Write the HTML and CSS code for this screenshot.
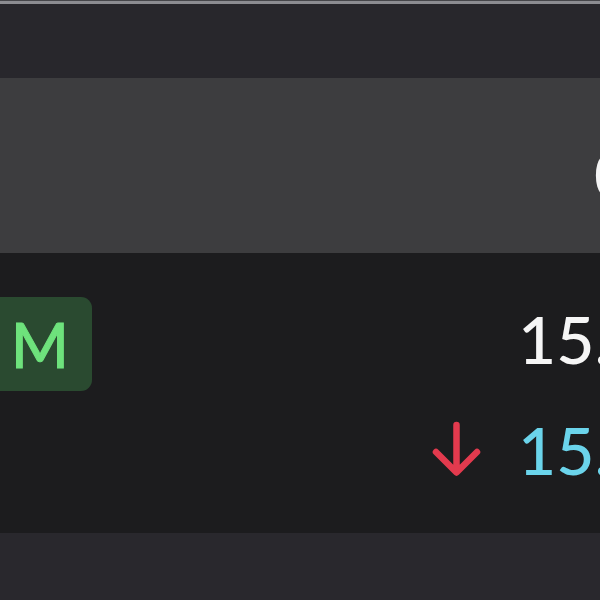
FILE: index.html
```html
<!DOCTYPE html>
<html>
<head>
<meta charset="utf-8">
<link rel="stylesheet" href="styles.css">
</head>
<body>
<div class="screen">
  <div class="topline"></div>
  <div class="header"></div>
  <div class="band"><span class="band-text">0</span></div>
  <div class="row">
    <div class="badge">M</div>
    <div class="values">
      <div class="val main">15.62</div>
      <div class="val sub">
        <svg class="arrow" width="52" height="58" viewBox="0 0 52 58"><path d="M26.5 5 V52 M6 32 L26.5 52.5 L47 32" fill="none" stroke="#e33a4e" stroke-width="6.5" stroke-linecap="round" stroke-linejoin="round"/></svg>
        <span class="subnum">15.48</span>
      </div>
    </div>
  </div>
  <div class="footer"></div>
</div>
</body>
</html>
```
FILE: styles.css
```css
html, body {
  margin: 0;
  padding: 0;
  background: #29282d;
  overflow: hidden;
}
.screen {
  width: 600px;
  height: 600px;
  overflow: hidden;
  font-family: "Lato", "DejaVu Sans", sans-serif;
  font-weight: 500;
}
.topline {
  height: 1px;
  background: #46464a;
  border-bottom: 3px solid #8c8c91;
}
.header {
  height: 74px;
  background: #28272c;
}
.band {
  height: 175px;
  background: #3d3d3f;
  padding-left: 594px;
  padding-top: 63px;
  box-sizing: border-box;
  white-space: nowrap;
}
.band-text {
  font-size: 66px;
  line-height: 1;
  color: #f4f4f4;
}
.row {
  height: 280px;
  background: #1c1c1e;
  display: flex;
  align-items: flex-start;
  padding-top: 44px;
  box-sizing: border-box;
}
.badge {
  width: 104px;
  height: 94px;
  margin-left: -12px;
  border-radius: 11px;
  background: #2a4a30;
  color: #6ee27c;
  font-size: 62px;
  -webkit-text-stroke: 1px currentColor;
  display: flex;
  align-items: center;
  justify-content: center;
  flex-shrink: 0;
}
.values {
  margin-left: 338px;
  margin-top: 9px;
  display: flex;
  flex-direction: column;
  gap: 45px;
  white-space: nowrap;
}
.val {
  font-size: 66px;
  line-height: 1;
  height: 66px;
}
.main {
  color: #f6f6f6;
  padding-left: 88px;
}
.sub {
  display: flex;
  align-items: flex-start;
  color: #6bd4eb;
}
.arrow {
  display: block;
  margin-top: 3px;
  flex-shrink: 0;
}
.subnum {
  margin-left: 36px;
}
.footer {
  height: 67px;
  background: #29282d;
}
```
